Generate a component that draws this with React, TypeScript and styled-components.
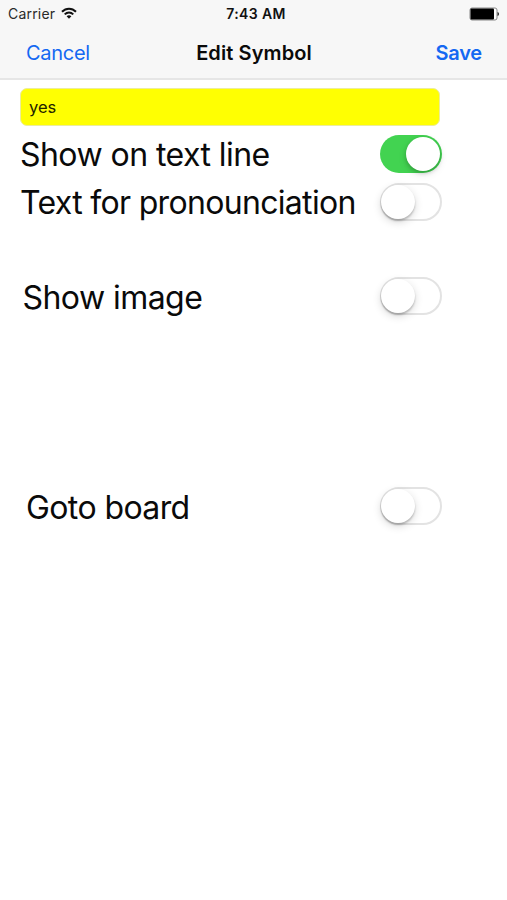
import React, { useState } from "react";
import styled, { createGlobalStyle } from "styled-components";

const GlobalStyle = createGlobalStyle`
  * { box-sizing: border-box; }
  body { margin: 0; background: #fff; }
`;

const Screen = styled.div`
  width: 507px;
  height: 900px;
  overflow: hidden;
  display: flex;
  flex-direction: column;
  background: #fff;
  color: #0a0a0a;
  font-family: Inter, "Liberation Sans", sans-serif;
`;

const Header = styled.header`
  height: 80px;
  background: #f7f7f7;
  border-bottom: 2px solid #e6e6e6;
`;

const StatusBar = styled.div`
  display: grid;
  grid-template-columns: 1fr auto 1fr;
  align-items: center;
  height: 28px;
  padding: 0 7px 0 8px;
  line-height: 28px;
`;

const Carrier = styled.span`
  display: flex;
  align-items: center;
  gap: 6px;
  color: #2a2a2a;
  font-size: 14px;
  letter-spacing: 0.2px;
`;

const Clock = styled.span`
  margin-left: 4px;
  font-size: 14px;
  font-weight: 600;
  letter-spacing: 0.35px;
  color: #111;
`;

const BatteryIcon = styled.svg`
  display: block;
  justify-self: end;
  width: 31px;
  height: 14px;
  margin-top: -1px;
`;

const WifiIcon = styled.svg`
  display: block;
  width: 16px;
  height: 12px;
  margin-top: -2px;
`;

const NavBar = styled.nav`
  display: grid;
  grid-template-columns: 1fr auto 1fr;
  align-items: center;
  height: 49px;
  padding: 0 25px 0 26px;
`;

const NavButton = styled.button<{ $strong?: boolean }>`
  justify-self: ${(p) => (p.$strong ? "end" : "start")};
  padding: 0;
  border: 0;
  background: none;
  font: ${(p) => (p.$strong ? 600 : 400)} 20px/24px Inter, sans-serif;
  letter-spacing: ${(p) => (p.$strong ? "-0.2px" : "-0.3px")};
  color: #1468f2;
`;

const Title = styled.h1`
  margin: 0;
  font-size: 20px;
  line-height: 24px;
  font-weight: 600;
  letter-spacing: 0.1px;
`;

const Form = styled.main`
  display: flex;
  flex-direction: column;
  width: 442px;
  padding: 8px 0 0 20px;
`;

const Field = styled.input`
  width: 420px;
  height: 38px;
  padding: 0 8px;
  border: 1px solid #ecec9c;
  border-radius: 7px;
  outline: 0;
  background: #ffff02;
  color: #222200;
  font: 400 16.5px/20px Inter, sans-serif;
`;

const Row = styled.div<{ $gap: number; $indent: number }>`
  display: flex;
  align-items: center;
  justify-content: space-between;
  height: 38px;
  margin-top: ${(p) => p.$gap}px;
  padding-left: ${(p) => p.$indent}px;
`;

const Label = styled.span<{ $tracking: number; $drop: number }>`
  padding-top: ${(p) => p.$drop * 2}px;
  font-size: 32px;
  line-height: 38px;
  white-space: nowrap;
  letter-spacing: ${(p) => p.$tracking}px;
`;

const Track = styled.button<{ $on: boolean }>`
  display: flex;
  align-items: center;
  justify-content: ${(p) => (p.$on ? "flex-end" : "flex-start")};
  flex: none;
  width: 62px;
  height: 38px;
  padding: ${(p) => (p.$on ? "0 2px" : "0")};
  border: ${(p) => (p.$on ? "0" : "2px solid #e3e3e3")};
  border-radius: 19px;
  background: ${(p) => (p.$on ? "#42d351" : "#fff")};
`;

const Knob = styled.span<{ $on: boolean }>`
  width: 34px;
  height: 34px;
  margin-left: ${(p) => (p.$on ? 0 : -1)}px;
  border-radius: 50%;
  background: #fff;
  box-shadow: ${(p) =>
    p.$on
      ? "0 2px 4px rgba(0,0,0,.2), 0 3px 9px rgba(0,0,0,.1)"
      : "0 2px 2px rgba(0,0,0,.2), 0 3px 9px rgba(0,0,0,.16)"};
`;

const settings = [
  { label: "Show on text line", gap: 9, indent: 0, drop: 1, tracking: -0.55, on: true },
  { label: "Text for pronounciation", gap: 10, indent: 0, drop: 1, tracking: -0.68, on: false },
  { label: "Show image", gap: 56, indent: 2.5, drop: 2, tracking: -0.55, on: false },
  { label: "Goto board", gap: 172, indent: 6, drop: 2, tracking: -0.6, on: false },
];

function Toggle({ initial, label }: { initial: boolean; label: string }) {
  const [on, setOn] = useState(initial);
  return (
    <Track $on={on} role="switch" aria-checked={on} aria-label={label} onClick={() => setOn(!on)}>
      <Knob $on={on} />
    </Track>
  );
}

export default function App() {
  return (
    <Screen>
      <GlobalStyle />
      <Header>
        <StatusBar>
          <Carrier>
            Carrier
            <WifiIcon viewBox="0 0 16 12">
              <g fill="none" stroke="#111" strokeWidth="2">
                <path d="M1 4.7C5 .6 11 .6 15 4.7" />
                <path d="M3.7 7.4C6.2 5 9.8 5 12.3 7.4" />
              </g>
              <path d="M5.6 9.2C7 8 9 8 10.4 9.2L8 11.7Z" fill="#111" />
            </WifiIcon>
          </Carrier>
          <Clock>7:43 AM</Clock>
          <BatteryIcon viewBox="0 0 31 14">
            <rect x="1" y="1" width="27" height="12" rx="2" fill="#fff" stroke="#888" />
            <rect x="1.5" y="1.5" width="23.5" height="11" rx="1" fill="#000" />
            <path d="M28.5 5C30.5 5.4 30.5 8.6 28.5 9Z" fill="#333" />
          </BatteryIcon>
        </StatusBar>
        <NavBar>
          <NavButton>Cancel</NavButton>
          <Title>Edit Symbol</Title>
          <NavButton $strong>Save</NavButton>
        </NavBar>
      </Header>
      <Form>
        <Field defaultValue="yes" aria-label="Symbol text" />
        {settings.map((s) => (
          <Row key={s.label} $gap={s.gap} $indent={s.indent}>
            <Label $tracking={s.tracking} $drop={s.drop}>{s.label}</Label>
            <Toggle initial={s.on} label={s.label} />
          </Row>
        ))}
      </Form>
    </Screen>
  );
}
